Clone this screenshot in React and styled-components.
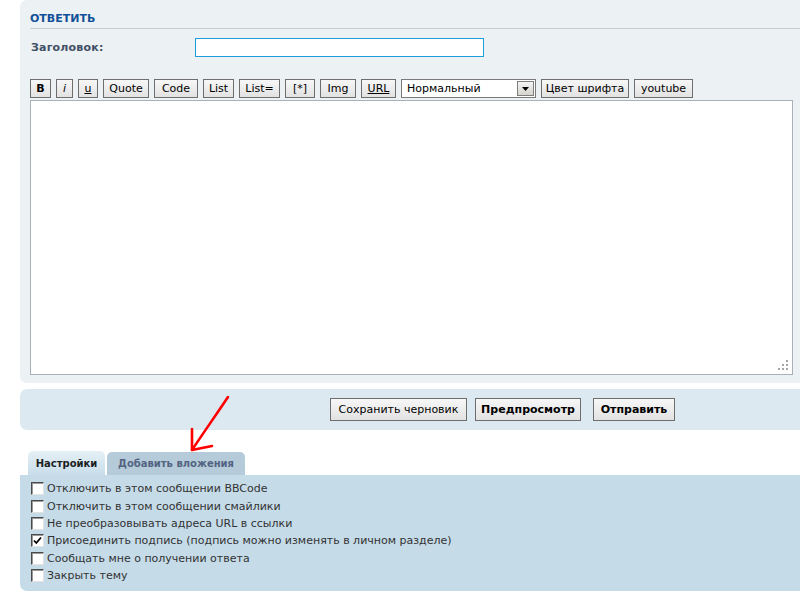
import React from "react";
import styled, { createGlobalStyle, css } from "styled-components";

const Global = createGlobalStyle`
  html, body { margin: 0; padding: 0; background: #ffffff; }
  body { font-family: "DejaVu Sans", Verdana, sans-serif; font-size: 11px; color: #333; }
`;

const Page = styled.div`
  position: relative;
  width: 800px;
  height: 600px;
  overflow: hidden;
  background: #fff;
`;

const PostPanel = styled.section`
  margin-left: 20px;
  width: 965px;
  box-sizing: border-box;
  padding: 12px 0 8px 10px;
  background: #ecf1f3;
  border-radius: 7px;
`;

const Title = styled.h3`
  margin: 0;
  padding-bottom: 3px;
  border-bottom: 1px solid #cccccc;
  font-size: 11px;
  line-height: 13px;
  font-weight: bold;
  text-transform: uppercase;
  color: #115098;
`;

const FieldRow = styled.div`
  display: flex;
  align-items: center;
  margin-top: 9px;
`;

const Label = styled.label`
  width: 164px;
  padding-left: 1px;
  font-weight: bold;
  font-size: 11px;
  letter-spacing: 0.2px;
  color: #425067;
`;

const TextInput = styled.input`
  width: 289px;
  height: 19px;
  box-sizing: border-box;
  border: 1px solid #1e9ddb;
  background: #fff;
  padding: 0 3px;
  outline: none;
  font-family: inherit;
  font-size: 11px;
`;

const Toolbar = styled.div`
  display: flex;
  align-items: center;
  gap: 5px;
  margin-top: 22px;
  height: 19px;
`;

const buttonBase = css`
  box-sizing: border-box;
  border: 1px solid #6e6e6e;
  background: linear-gradient(#f7f7f7, #e2e2e2);
  font-family: "DejaVu Sans", Verdana, sans-serif;
  color: #000;
  padding: 0;
  display: flex;
  align-items: center;
  justify-content: center;
  white-space: nowrap;
  flex-shrink: 0;
`;

const ToolButton = styled.button`
  ${buttonBase}
  width: ${(p) => p.$w}px;
  height: 19px;
  font-size: 11px;
  font-weight: ${(p) => (p.$bold ? "bold" : "normal")};
  font-style: ${(p) => (p.$italic ? "italic" : "normal")};
  text-decoration: ${(p) => (p.$underline ? "underline" : "none")};
`;

const SelectBox = styled.div`
  box-sizing: border-box;
  width: 135px;
  height: 19px;
  flex-shrink: 0;
  border: 1px solid #7a7a7a;
  background: #fff;
  display: flex;
  align-items: center;
  justify-content: space-between;
  padding: 0 1px 0 5px;
  font-size: 11px;
  color: #000;
`;

const SelectArrow = styled.span`
  box-sizing: border-box;
  width: 17px;
  height: 15px;
  border: 1px solid #7e7e7e;
  background: linear-gradient(#f4f4f4, #d6d3cc);
  display: flex;
  align-items: center;
  justify-content: center;
`;

const EditorWrap = styled.div`
  position: relative;
  width: 763px;
  height: 275px;
  margin-top: 2px;
`;

const Editor = styled.textarea`
  display: block;
  width: 100%;
  height: 100%;
  box-sizing: border-box;
  border: 1px solid #a9b1b8;
  background: #fff;
  resize: none;
  outline: none;
  font-family: inherit;
`;

const Grip = styled.svg`
  position: absolute;
  right: 4px;
  bottom: 4px;
`;

const ActionBar = styled.div`
  margin: 6px 0 0 20px;
  width: 965px;
  height: 41px;
  box-sizing: border-box;
  background: #dde9f1;
  border-radius: 7px;
  display: flex;
  align-items: center;
  justify-content: center;
`;

const ActionButton = styled.button`
  ${buttonBase}
  width: ${(p) => p.$w}px;
  height: 23px;
  margin-left: ${(p) => p.$ml || 0}px;
  font-size: 11px;
  font-weight: ${(p) => (p.$bold ? "bold" : "normal")};
`;

const Tabs = styled.div`
  display: flex;
  align-items: flex-end;
  gap: 2px;
  margin: 21px 0 0 28px;
  height: 24px;
`;

const Tab = styled.div`
  box-sizing: border-box;
  width: ${(p) => p.$w}px;
  height: ${(p) => (p.$active ? 24 : 23)}px;
  border-radius: 5px 5px 0 0;
  display: flex;
  align-items: center;
  justify-content: center;
  font-size: 10px;
  font-weight: bold;
  white-space: nowrap;
  color: ${(p) => (p.$active ? "#1b1f24" : "#536482")};
  background: ${(p) =>
    p.$active ? "linear-gradient(#e6f0f6, #c8dde9)" : "#b5cbd9"};
`;

const OptionsPanel = styled.div`
  margin-left: 20px;
  width: 965px;
  box-sizing: border-box;
  padding: 5px 0 7px 11px;
  background: #c5dbe8;
  border-radius: 0 0 7px 7px;
`;

const OptionRow = styled.label`
  display: flex;
  align-items: center;
  gap: 3px;
  height: 17.4px;
  font-size: 11px;
  color: #333;
`;

const CheckBox = styled.span`
  box-sizing: border-box;
  width: 13px;
  height: 13px;
  background: #fff;
  border-style: solid;
  border-width: 1px;
  border-color: #4a4a4a #e2e2e2 #e2e2e2 #4a4a4a;
  box-shadow: inset 1px 1px 0 #9a9a9a;
  display: flex;
  align-items: center;
  justify-content: center;
`;

const Annotation = styled.svg`
  position: absolute;
  left: 0;
  top: 0;
  pointer-events: none;
`;

const tools = [
  { t: "B", w: 21, bold: true },
  { t: "i", w: 17, italic: true },
  { t: "u", w: 20, underline: true },
  { t: "Quote", w: 46 },
  { t: "Code", w: 44 },
  { t: "List", w: 31 },
  { t: "List=", w: 41 },
  { t: "[*]", w: 30 },
  { t: "Img", w: 36 },
  { t: "URL", w: 35, underline: true },
];

const options = [
  { t: "Отключить в этом сообщении BBCode" },
  { t: "Отключить в этом сообщении смайлики" },
  { t: "Не преобразовывать адреса URL в ссылки" },
  { t: "Присоединить подпись (подпись можно изменять в личном разделе)", checked: true },
  { t: "Сообщать мне о получении ответа" },
  { t: "Закрыть тему" },
];

function Check({ checked }) {
  return (
    <CheckBox>
      {checked && (
        <svg width="9" height="9" viewBox="0 0 9 9">
          <path d="M1 4.5 L3.3 7 L8 1.5" fill="none" stroke="#000" strokeWidth="1.8" />
        </svg>
      )}
    </CheckBox>
  );
}

export default function App() {
  return (
    <Page>
      <Global />
      <PostPanel>
        <Title>Ответить</Title>
        <FieldRow>
          <Label>Заголовок:</Label>
          <TextInput type="text" />
        </FieldRow>
        <Toolbar>
          {tools.map((b) => (
            <ToolButton
              key={b.t}
              $w={b.w}
              $bold={b.bold}
              $italic={b.italic}
              $underline={b.underline}
            >
              {b.t}
            </ToolButton>
          ))}
          <SelectBox>
            <span>Нормальный</span>
            <SelectArrow>
              <svg width="7" height="4" viewBox="0 0 7 4">
                <path d="M0 0 H7 L3.5 4 Z" fill="#000" />
              </svg>
            </SelectArrow>
          </SelectBox>
          <ToolButton $w={88}>Цвет шрифта</ToolButton>
          <ToolButton $w={59}>youtube</ToolButton>
        </Toolbar>
        <EditorWrap>
          <Editor />
          <Grip width="12" height="12" viewBox="0 0 12 12">
            <g fill="#a6a6a6">
              <rect x="9" y="1" width="2" height="2" />
              <rect x="5" y="5" width="2" height="2" />
              <rect x="9" y="5" width="2" height="2" />
              <rect x="1" y="9" width="2" height="2" />
              <rect x="5" y="9" width="2" height="2" />
              <rect x="9" y="9" width="2" height="2" />
            </g>
          </Grip>
        </EditorWrap>
      </PostPanel>
      <ActionBar>
        <ActionButton $w={137}>Сохранить черновик</ActionButton>
        <ActionButton $w={106} $ml={8} $bold>Предпросмотр</ActionButton>
        <ActionButton $w={82} $ml={12} $bold>Отправить</ActionButton>
      </ActionBar>
      <Tabs>
        <Tab $active $w={77}>Настройки</Tab>
        <Tab $w={138}>Добавить вложения</Tab>
      </Tabs>
      <OptionsPanel>
        {options.map((o) => (
          <OptionRow key={o.t}>
            <Check checked={o.checked} />
            <span>{o.t}</span>
          </OptionRow>
        ))}
      </OptionsPanel>
      <Annotation width="800" height="600" viewBox="0 0 800 600">
        <g fill="none" stroke="#ff0000" strokeWidth="2.6" strokeLinecap="round" strokeLinejoin="round">
          <path d="M228 397 C 218 412, 204 432, 192 450" />
          <path d="M192 429 L192 450 L212 446" />
        </g>
      </Annotation>
    </Page>
  );
}
